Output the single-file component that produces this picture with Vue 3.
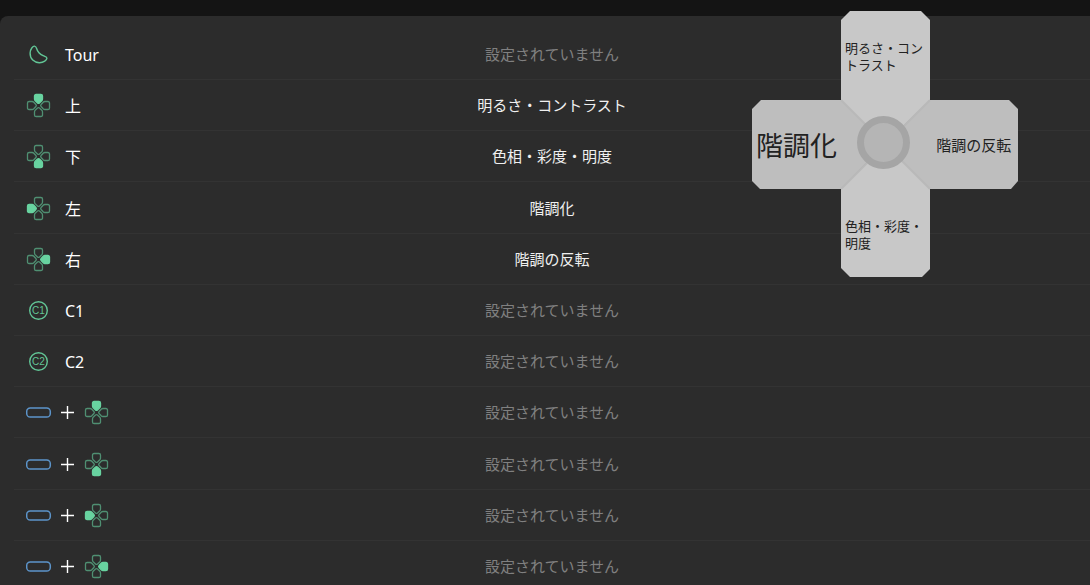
<script setup>
const unset = '設定されていません'

const rows = [
  { icon: 'tour', label: 'Tour' },
  { icon: 'pad', dir: 'up', label: '上', value: '明るさ・コントラスト' },
  { icon: 'pad', dir: 'down', label: '下', value: '色相・彩度・明度' },
  { icon: 'pad', dir: 'left', label: '左', value: '階調化' },
  { icon: 'pad', dir: 'right', label: '右', value: '階調の反転' },
  { icon: 'circle', label: 'C1' },
  { icon: 'circle', label: 'C2' },
  { icon: 'combo', dir: 'up' },
  { icon: 'combo', dir: 'down' },
  { icon: 'combo', dir: 'left' },
  { icon: 'combo', dir: 'right' }
]

const petals = [
  { dir: 'up', turn: 0 },
  { dir: 'right', turn: 90 },
  { dir: 'down', turn: 180 },
  { dir: 'left', turn: 270 }
]
</script>

<template>
  <main class="page">
    <ul class="panel">
      <li v-for="(row, i) in rows" :key="i" class="row">
        <div class="key">
          <svg v-if="row.icon === 'tour'" class="icon" viewBox="0.5 0.5 26 26" aria-hidden="true">
            <path class="line" d="M9 4.6C7.5 4.4 4.7 7.5 4.6 11.6C4.4 17.4 8.7 21.3 14 21.2C18.2 21.1 21.4 18.6 21.4 16.8C21.4 15.2 19.5 15.2 17.6 14.2C14.6 12.7 12.1 10.3 11.2 7.2C10.8 5.8 10.3 4.8 9 4.6Z" />
          </svg>

          <svg v-if="row.icon === 'circle'" class="icon" viewBox="0.5 0.5 26 26" aria-hidden="true">
            <circle class="line" cx="13" cy="13" r="8.8" />
            <text class="mark" x="13" y="16.5" text-anchor="middle">{{ row.label }}</text>
          </svg>

          <template v-if="row.icon === 'combo'">
            <svg class="icon" viewBox="0.5 0.5 26 26" aria-hidden="true">
              <rect class="bar" x="1.2" y="8.5" width="23.6" height="9" rx="3.6" />
            </svg>
            <svg class="plus" viewBox="0 0 14 14" aria-hidden="true">
              <path d="M6.5 0V13M0 6.5H13" />
            </svg>
          </template>

          <svg v-if="row.dir" class="icon" viewBox="0.5 0.5 26 26" aria-hidden="true">
            <path
              v-for="p in petals"
              :key="p.dir"
              :class="['petal', { on: p.dir === row.dir }]"
              :transform="`rotate(${p.turn} 13 13)`"
              d="M10.6 2H15.4Q17 2 17 3.6V6.6Q17 7.6 16.3 8.3L14 10.4Q13 11.3 12 10.4L9.7 8.3Q9 7.6 9 6.6V3.6Q9 2 10.6 2Z"
            />
          </svg>

          <span v-if="row.label" class="label">{{ row.label }}</span>
        </div>
        <span :class="['value', { empty: !row.value }]">{{ row.value || unset }}</span>
      </li>
    </ul>

    <div class="cross">
      <svg class="shape" viewBox="0 0 266 266" aria-hidden="true">
        <path class="vertical" d="M98 0H169L178 9V89L133 133L89 89V9Z" />
        <path class="vertical" d="M89 178L133 133L178 178V258L170 266H98L89 257Z" />
        <path class="horizontal" d="M9 89H89L133 133L89 178H8L0 170V98Z" />
        <path class="horizontal" d="M178 89H257L266 98V170L259 178H178L133 133Z" />
        <path class="seam" d="M89 89L178 178M178 89L89 178" />
        <circle class="hub" cx="131.5" cy="131.5" r="23" />
      </svg>
      <button type="button" class="arm up">明るさ・コントラスト</button>
      <button type="button" class="arm left">階調化</button>
      <button type="button" class="arm right">階調の反転</button>
      <button type="button" class="arm down">色相・彩度・明度</button>
    </div>
  </main>
</template>

<style>
body {
  margin: 0;
  background: #141414;
}
</style>

<style scoped>
.page {
  position: relative;
  box-sizing: border-box;
  height: 100vh;
  padding-top: 16px;
  overflow: hidden;
  background: #141414;
  font-family: "Noto Sans", "Noto Sans CJK JP", sans-serif;
}

.panel {
  margin: 0;
  padding: 13px 0 0 14px;
  min-height: 100%;
  list-style: none;
  background: #2c2c2c;
  border-top-left-radius: 8px;
}

.row {
  box-sizing: border-box;
  display: grid;
  grid-template-columns: 1fr auto 1fr;
  align-items: center;
  height: 51px;
  padding-top: 2px;
  border-bottom: 1px solid #333;
}

.row:nth-child(5n + 4) {
  height: 52px;
}

.key {
  display: flex;
  align-items: center;
  padding-left: 12px;
}

.icon {
  flex: none;
  width: 26px;
  height: 26px;
}

.line {
  fill: none;
  stroke: #62c596;
  stroke-width: 1.4;
}

.mark {
  fill: #62c596;
  font: 10px "Liberation Sans", sans-serif;
}

.petal {
  fill: none;
  stroke: #4f8f72;
  stroke-width: 1.3;
}

.petal.on {
  fill: #68d3a0;
  stroke: #68d3a0;
}

.bar {
  fill: none;
  stroke: #5c94ca;
  stroke-width: 1.5;
}

.plus {
  width: 14px;
  height: 14px;
  margin: 0 9px;
}

.plus path {
  stroke: #fff;
  stroke-width: 1.4;
}

.label {
  margin-left: 13px;
  font-size: 16px;
  line-height: 24px;
  color: #fff;
}

.value {
  padding-bottom: 2px;
  font-size: 15px;
  line-height: 24px;
  color: #f0f0f0;
}

.value.empty {
  color: #808080;
}

.cross {
  position: absolute;
  top: 11px;
  right: 72px;
  display: grid;
  grid-template: repeat(3, 1fr) / repeat(3, 1fr);
  width: 266px;
  height: 266px;
}

.shape {
  position: absolute;
  inset: 0;
}

.vertical {
  fill: #c8c8c8;
}

.horizontal {
  fill: #bebebe;
}

.seam {
  stroke: #b9b9b9;
  stroke-width: 2;
}

.hub {
  fill: #b5b5b5;
  stroke: #a5a5a5;
  stroke-width: 7;
}

.arm {
  position: relative;
  padding: 8px 4px 4px;
  border: 0;
  background: none;
  color: #222;
  font-family: inherit;
  font-size: 13px;
  line-height: 17px;
  text-align: left;
}

.up {
  grid-area: 1 / 2;
}

.left {
  grid-area: 2 / 1;
  font-size: 27px;
  white-space: nowrap;
}

.right {
  grid-area: 2 / 3;
  font-size: 15px;
  text-align: center;
  white-space: nowrap;
}

.down {
  grid-area: 3 / 2;
}
</style>
